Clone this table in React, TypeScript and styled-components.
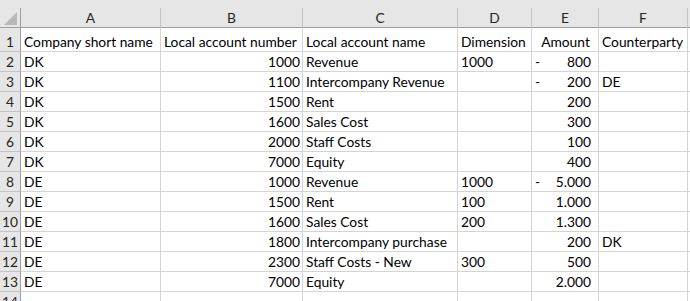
import React from "react";
import styled, { createGlobalStyle } from "styled-components";

const GlobalStyle = createGlobalStyle`
  html, body {
    margin: 0;
    padding: 0;
    background: #ffffff;
    overflow: hidden;
  }
  body {
    font-family: Lato, "Open Sans", Arial, sans-serif;
    font-size: 13.8px;
    color: #000;
  }
`;

const COLUMNS = "21px 140px 142px 155px 74px 67px 89px 1fr";
const GRID = "#d4d4d4";
const HEAD_BG = "#e6e6e6";
const HEAD_LINE = "#c4c4c4";
const HEAD_EDGE = "#9e9e9e";

const Page = styled.div`
  width: 690px;
  height: 301px;
  overflow: hidden;
`;

const TopStrip = styled.div`
  height: 8px;
  background: ${HEAD_BG};
`;

const Row = styled.div<{ $height: number }>`
  display: grid;
  grid-template-columns: ${COLUMNS};
  height: ${({ $height }) => $height}px;
`;

const Corner = styled.div`
  position: relative;
  background: ${HEAD_BG};
  border-right: 1px solid ${HEAD_EDGE};
  border-bottom: 1px solid ${HEAD_EDGE};
  box-sizing: border-box;
`;

const CornerTriangle = styled.svg`
  position: absolute;
  left: 4px;
  top: 4px;
`;

const ColHead = styled.div`
  display: flex;
  align-items: center;
  justify-content: center;
  background: ${HEAD_BG};
  border-right: 1px solid ${HEAD_LINE};
  border-bottom: 1px solid ${HEAD_EDGE};
  box-sizing: border-box;
  color: #262626;
  padding-bottom: 1px;
`;

const RowHead = styled.div`
  display: flex;
  align-items: flex-end;
  justify-content: center;
  background: ${HEAD_BG};
  border-right: 1px solid ${HEAD_EDGE};
  border-bottom: 1px solid ${HEAD_LINE};
  box-sizing: border-box;
  color: #262626;
  line-height: 17px;
  padding-bottom: 1px;
`;

const Cell = styled.div<{ $align?: "left" | "right" | "center" }>`
  display: flex;
  align-items: flex-end;
  justify-content: ${({ $align }) =>
    $align === "right" ? "flex-end" : $align === "center" ? "center" : "flex-start"};
  border-right: 1px solid ${GRID};
  border-bottom: 1px solid ${GRID};
  box-sizing: border-box;
  padding: 0 2px 1px 3px;
  line-height: 17px;
  white-space: nowrap;
  overflow: hidden;
`;

const Filler = styled.div<{ $head?: boolean }>`
  background: ${({ $head }) => ($head ? HEAD_BG : "transparent")};
  border-bottom: 1px solid ${({ $head }) => ($head ? HEAD_EDGE : GRID)};
  box-sizing: border-box;
`;

const AmountCell = styled(Cell)`
  justify-content: space-between;
  padding-right: 7px;
`;

const Minus = styled.span``;

type Line = {
  company: string;
  account: string;
  name: string;
  dimension: string;
  amount: string;
  negative?: boolean;
  counterparty: string;
};

const lines: Line[] = [
  { company: "DK", account: "1000", name: "Revenue", dimension: "1000", amount: "800", negative: true, counterparty: "" },
  { company: "DK", account: "1100", name: "Intercompany Revenue", dimension: "", amount: "200", negative: true, counterparty: "DE" },
  { company: "DK", account: "1500", name: "Rent", dimension: "", amount: "200", counterparty: "" },
  { company: "DK", account: "1600", name: "Sales Cost", dimension: "", amount: "300", counterparty: "" },
  { company: "DK", account: "2000", name: "Staff Costs", dimension: "", amount: "100", counterparty: "" },
  { company: "DK", account: "7000", name: "Equity", dimension: "", amount: "400", counterparty: "" },
  { company: "DE", account: "1000", name: "Revenue", dimension: "1000", amount: "5.000", negative: true, counterparty: "" },
  { company: "DE", account: "1500", name: "Rent", dimension: "100", amount: "1.000", counterparty: "" },
  { company: "DE", account: "1600", name: "Sales Cost", dimension: "200", amount: "1.300", counterparty: "" },
  { company: "DE", account: "1800", name: "Intercompany purchase", dimension: "", amount: "200", counterparty: "DK" },
  { company: "DE", account: "2300", name: "Staff Costs - New", dimension: "300", amount: "500", counterparty: "" },
  { company: "DE", account: "7000", name: "Equity", dimension: "", amount: "2.000", counterparty: "" },
];

const letters = ["A", "B", "C", "D", "E", "F"];

const App = () => {
  return (
    <Page>
      <GlobalStyle />
      <TopStrip />
      <Row $height={20}>
        <Corner>
          <CornerTriangle width="14" height="13" viewBox="0 0 14 13">
            <polygon points="0,13 13,13 13,0" fill="#b8b8b8" />
          </CornerTriangle>
        </Corner>
        {letters.map((l) => (
          <ColHead key={l}>{l}</ColHead>
        ))}
        <Filler $head />
      </Row>
      <Row $height={24}>
        <RowHead>1</RowHead>
        <Cell>Company short name</Cell>
        <Cell>Local account number</Cell>
        <Cell>Local account name</Cell>
        <Cell>Dimension</Cell>
        <Cell $align="center">Amount</Cell>
        <Cell>Counterparty</Cell>
        <Filler />
      </Row>
      {lines.map((line, i) => (
        <Row $height={20} key={i}>
          <RowHead>{i + 2}</RowHead>
          <Cell>{line.company}</Cell>
          <Cell $align="right">{line.account}</Cell>
          <Cell>{line.name}</Cell>
          <Cell>{line.dimension}</Cell>
          <AmountCell>
            <Minus>{line.negative ? "-" : ""}</Minus>
            <span>{line.amount}</span>
          </AmountCell>
          <Cell>{line.counterparty}</Cell>
          <Filler />
        </Row>
      ))}
      <Row $height={20}>
        <RowHead>14</RowHead>
        <Cell />
        <Cell />
        <Cell />
        <Cell />
        <Cell />
        <Cell />
        <Filler />
      </Row>
    </Page>
  );
};

export default App;
